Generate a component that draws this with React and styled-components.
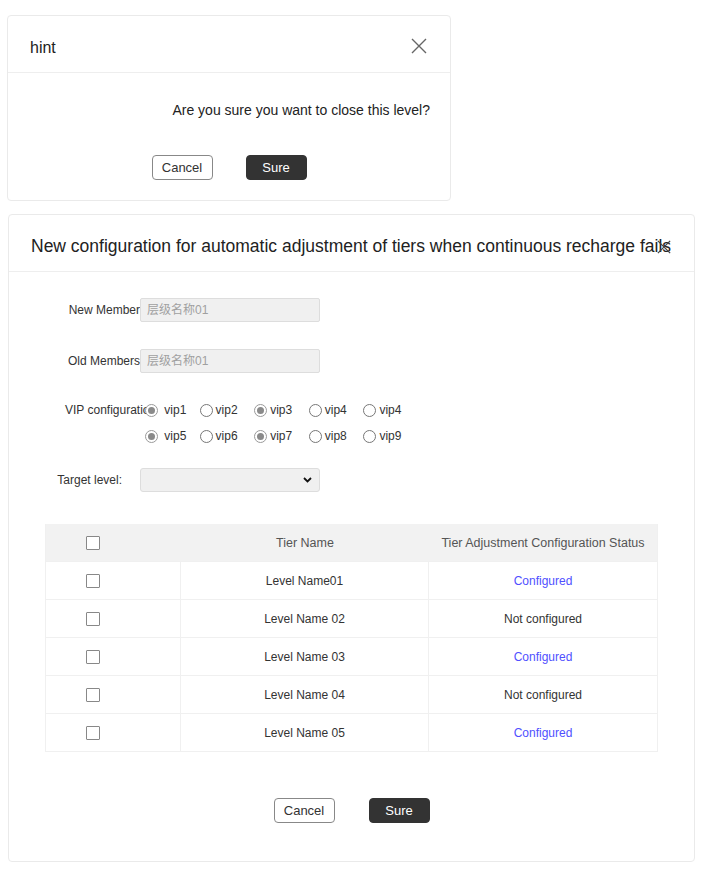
import React from "react";
import styled, { createGlobalStyle } from "styled-components";

const GlobalStyle = createGlobalStyle`
  html, body {
    margin: 0;
    padding: 0;
    background: #fff;
    font-family: "Liberation Sans", Arial, "Noto Sans CJK SC", sans-serif;
    color: #333;
  }
  * { box-sizing: border-box; }
`;

const Page = styled.div`
  padding-top: 15px;
  display: flex;
  flex-direction: column;
  align-items: flex-start;
  gap: 13px;
`;

const Dialog = styled.div`
  position: relative;
  margin-left: ${(p) => p.left}px;
  width: ${(p) => p.width}px;
  border: 1px solid #eaeaea;
  border-radius: 4px;
  background: #fff;
`;

const Header = styled.div`
  position: relative;
  height: 57px;
  display: flex;
  align-items: center;
  padding-left: ${(p) => p.pad}px;
  padding-top: 7px;
  border-bottom: 1px solid #eee;
  font-size: ${(p) => p.size}px;
  color: #222;
  white-space: nowrap;
`;

const Close = styled.span`
  position: absolute;
  right: ${(p) => p.right}px;
  top: ${(p) => p.top}px;
  display: flex;
  cursor: pointer;
`;

const HintBody = styled.div`
  padding: 27px 20px 20px;
`;

const Message = styled.p`
  margin: 0 0 35px;
  text-align: right;
  font-size: 14px;
  line-height: 20px;
  color: #222;
`;

const Actions = styled.div`
  display: flex;
  justify-content: center;
  gap: ${(p) => p.gap}px;
`;

const Button = styled.button`
  width: 61px;
  height: 25px;
  border-radius: 4px;
  font-family: inherit;
  font-size: 13px;
  cursor: pointer;
  border: 1px solid ${(p) => (p.primary ? "#333" : "#888")};
  background: ${(p) => (p.primary ? "#333" : "#fff")};
  color: ${(p) => (p.primary ? "#fff" : "#333")};
`;

const Form = styled.div`
  padding: 26px 0 0 48px;
`;

const Row = styled.div`
  display: flex;
  align-items: ${(p) => (p.top ? "flex-start" : "center")};
  margin-top: ${(p) => p.mt || 0}px;
`;

const Label = styled.div`
  width: ${(p) => p.width || 83}px;
  margin-left: ${(p) => p.ml || 0}px;
  flex-shrink: 0;
  text-align: right;
  white-space: nowrap;
  padding-right: ${(p) => p.pr || 0}px;
  font-size: 12px;
  color: #333;
  line-height: ${(p) => (p.top ? "26px" : "normal")};
`;

const TextInput = styled.input`
  width: 180px;
  height: 24px;
  border: 1px solid #ddd;
  background: #f0f0f0;
  border-radius: 2px;
  padding: 0 6px;
  font-family: inherit;
  font-size: 12px;
  color: #999;
  outline: none;
  &::placeholder { color: #a0a0a0; }
`;

const RadioGrid = styled.div`
  display: grid;
  grid-template-columns: repeat(5, 54.6px);
  grid-auto-rows: 26px;
  margin-left: -2px;
`;

const RadioItem = styled.label`
  display: flex;
  align-items: center;
  font-size: 12px;
  color: #333;
  gap: 3px;
`;

const Dot = styled.span`
  width: 13px;
  height: 13px;
  border-radius: 50%;
  background: #fff;
  border: 1px solid ${(p) => (p.checked ? "#9a9a9a" : "#777")};
  display: flex;
  align-items: center;
  justify-content: center;
  flex-shrink: 0;
  &::after {
    content: "";
    width: 7px;
    height: 7px;
    border-radius: 50%;
    background: ${(p) => (p.checked ? "#8a8a8a" : "transparent")};
  }
`;

const Select = styled.div`
  width: 180px;
  height: 24px;
  border: 1px solid #ddd;
  background: #f0f0f0;
  border-radius: 3px;
  display: flex;
  align-items: center;
  justify-content: flex-end;
  padding-right: 7px;
`;

const Table = styled.div`
  margin: 32px 36px 0;
  border-left: 1px solid #f0f0f0;
  border-right: 1px solid #f0f0f0;
`;

const TRow = styled.div`
  display: grid;
  grid-template-columns: 135px 248px 1fr;
  height: 38px;
  background: ${(p) => (p.head ? "#f2f2f2" : "#fff")};
  border-bottom: 1px solid #f0f0f0;
`;

const Cell = styled.div`
  display: flex;
  align-items: center;
  justify-content: ${(p) => (p.check ? "flex-start" : "center")};
  padding-left: ${(p) => (p.check ? 40 : 0)}px;
  border-right: ${(p) => (p.line ? "1px solid #f0f0f0" : "none")};
  font-size: 12px;
  color: ${(p) => p.color || "#333"};
  white-space: nowrap;
`;

const HeadCell = styled(Cell)`
  color: #555;
  font-size: 12.5px;
`;

const Box = styled.span`
  width: 14px;
  height: 14px;
  border: 1px solid #888;
  border-radius: 1px;
  background: #fff;
  display: block;
`;

const Footer = styled.div`
  padding: 46px 0 38px;
`;

const XIcon = ({ size, color, w }) => (
  <svg width={size} height={size} viewBox="0 0 16 16">
    <path d="M1 1 L15 15 M15 1 L1 15" stroke={color} strokeWidth={w} fill="none" />
  </svg>
);

const ChevronDown = () => (
  <svg width="9" height="6" viewBox="0 0 9 6">
    <path d="M1 1 L4.5 4.5 L8 1" stroke="#111" strokeWidth="1.8" fill="none" />
  </svg>
);

const vips = [
  ["vip1", true], ["vip2", false], ["vip3", true], ["vip4", false], ["vip4", false],
  ["vip5", true], ["vip6", false], ["vip7", true], ["vip8", false], ["vip9", false],
];

const levels = [
  ["Level Name01", true],
  ["Level Name 02", false],
  ["Level Name 03", true],
  ["Level Name 04", false],
  ["Level Name 05", true],
];

export default function App() {
  return (
    <>
      <GlobalStyle />
      <Page>
        <Dialog left={7} width={444}>
          <Header pad={22} size={16}>
            hint
            <Close right={23} top={22}>
              <XIcon size={16} color="#666" w={1.4} />
            </Close>
          </Header>
          <HintBody>
            <Message>Are you sure you want to close this level?</Message>
            <Actions gap={33}>
              <Button>Cancel</Button>
              <Button primary>Sure</Button>
            </Actions>
          </HintBody>
        </Dialog>

        <Dialog left={8} width={687}>
          <Header pad={22} size={17.5}>
            New configuration for automatic adjustment of tiers when continuous recharge fails
            <Close right={23} top={25}>
              <XIcon size={14} color="#444" w={1.5} />
            </Close>
          </Header>
          <Form>
            <Row>
              <Label>New Member</Label>
              <TextInput placeholder="层级名称01" readOnly />
            </Row>
            <Row mt={27}>
              <Label>Old Members</Label>
              <TextInput placeholder="层级名称01" readOnly />
            </Row>
            <Row mt={24} top>
              <Label top width={82} ml={8}>VIP configuration</Label>
              <RadioGrid>
                {vips.map(([name, on], i) => (
                  <RadioItem key={i}>
                    <Dot checked={on} />
                    {on && i % 5 === 0 ? "\u00a0" + name : name}
                  </RadioItem>
                ))}
              </RadioGrid>
            </Row>
            <Row mt={19}>
              <Label pr={18}>Target level:</Label>
              <Select>
                <ChevronDown />
              </Select>
            </Row>
          </Form>
          <Table>
            <TRow head>
              <HeadCell check><Box /></HeadCell>
              <HeadCell>Tier Name</HeadCell>
              <HeadCell>Tier Adjustment Configuration Status</HeadCell>
            </TRow>
            {levels.map(([name, ok]) => (
              <TRow key={name}>
                <Cell check line><Box /></Cell>
                <Cell line>{name}</Cell>
                <Cell color={ok ? "#5050ff" : "#333"}>{ok ? "Configured" : "Not configured"}</Cell>
              </TRow>
            ))}
          </Table>
          <Footer>
            <Actions gap={34}>
              <Button>Cancel</Button>
              <Button primary>Sure</Button>
            </Actions>
          </Footer>
        </Dialog>
      </Page>
    </>
  );
}
